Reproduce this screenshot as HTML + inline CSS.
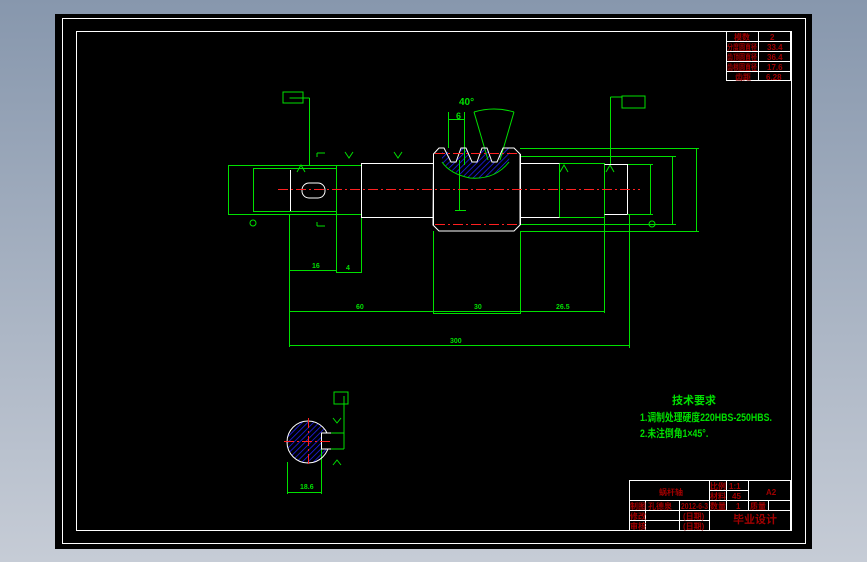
<!DOCTYPE html>
<html><head><meta charset="utf-8"><style>
html,body{margin:0;padding:0;width:867px;height:562px;overflow:hidden;background:linear-gradient(#8797ad,#c6ccd6);}
svg{position:absolute;left:0;top:0}
text{font-family:"Liberation Sans","Noto Sans CJK SC",sans-serif;}
</style></head><body>
<svg width="867" height="562" viewBox="0 0 867 562">
<defs>
<pattern id="h" width="4" height="4" patternUnits="userSpaceOnUse" patternTransform="rotate(45)">
<rect width="4" height="4" fill="#000"/><line x1="0" y1="0" x2="0" y2="4" stroke="#2020ff" stroke-width="1.5"/>
</pattern>
</defs>
<rect x="55" y="14" width="757" height="535" fill="#000"/>
<rect x="62.5" y="18.5" width="743" height="525" fill="none" stroke="#fff" stroke-width="1"/>
<rect x="76.5" y="31.5" width="715" height="499" fill="none" stroke="#fff" stroke-width="1"/>

<path d="M442 152 L448 152 L451 162 L456 162 L461 148 L466 148 L472 162 L477 162 L482 148 L487 148 L492 162 L497 162 L503 148 L510 148 L509 162 Q495 180 470 178 Q450 172 442 162Z" fill="url(#h)"/>
<path d="M442 162 Q450 174 470 178 Q495 180 509 162" fill="none" stroke="#00e000"/>
<circle cx="308" cy="442" r="21" fill="url(#h)"/>
<rect x="321" y="433" width="10" height="16" fill="#000"/>

<g fill="none" stroke="#00e000" stroke-width="1">
<rect x="228.5" y="165.5" width="108" height="49"/>
<rect x="253.5" y="168.5" width="83" height="43"/>
<rect x="336.5" y="165.5" width="25" height="49"/>
<rect x="559.5" y="163.5" width="45" height="54"/>
<path d="M289.5 214V347M336.5 214V273M361.5 217V273M289.5 270.5H336.5M336.5 272.5H361.5"/>
<path d="M289.5 311.5H604.5M433.5 231V314M520.5 231V314M604.5 217V313M433.5 313.5H520.5"/>
<path d="M629.5 214V348M289.5 345.5H629.5"/>
<path d="M520 148.5H699M696.5 148V231M520 231.5H699M520 156.5H676M672.5 156V224M520 224.5H676M604 164.5H653M650.5 164V214M604 214.5H653"/>
<path d="M309.5 98V165M289.5 98H309.5M283 92h20v11h-20zM283 92v11"/>
<path d="M610.5 97V165M610.5 97H622M622 96h23v12h-23z"/>
<path d="M448.5 112V148M464.5 112V165M448.5 119.5H464.5M474 112L488 160M514 112L500 160M474 112Q494 106 514 112"/>
<path d="M459.5 160V210M455 210.5H466"/>
<path d="M317 153h8M317 153v4M317 226h8M317 222v4"/>
<path d="M345 152l4 6 4-6M394 152l4 6 4-6M297 172l4-7 4 7M560 172l4-7 4 7M606 172l4-7 4 7"/>
<circle cx="253" cy="223" r="3"/><circle cx="652" cy="224" r="3"/>
<path d="M321 433H344V396M334 392h14v12h-14zM321 449H344M344 396V449M287.5 462V494M321.5 449V494M287.5 492.5H321.5"/>
<path d="M333 418l4 5 4-5M333 465l4-5 4 5"/>
</g>
<g fill="none" stroke="#fff" stroke-width="1">
<path d="M361.5 163.5H433.5M361.5 217.5H433.5M361.5 163V218"/>
<path d="M520.5 163.5H559.5M520.5 217.5H559.5"/>
<path d="M604.5 164.5H627.5V214M604.5 214.5H627.5"/>
<path d="M290.5 170V211"/>
<path d="M433.5 154L439 148H444L451 162H456L461 148H466L472 162H477L482 148H487L492 162H497L503 148H514L520 154V225L514 231H439L433 225Z"/>
<path d="M433.5 154V225M520.5 154V225"/>
<rect x="302" y="183" width="23" height="15" rx="7"/>
<circle cx="308" cy="442" r="21"/>
</g>
<rect x="321" y="433" width="9" height="16" fill="#000"/>
<path d="M321.5 433V449M321 433H331M321 449H331" stroke="#fff" fill="none"/>
<g stroke="#ff2020" stroke-width="1" stroke-dasharray="10,3,2,3">
<line x1="278" y1="189.5" x2="640" y2="189.5"/>
<line x1="435" y1="153.5" x2="520" y2="153.5"/>
<line x1="435" y1="224.5" x2="520" y2="224.5"/>
<line x1="284" y1="441.5" x2="332" y2="441.5"/>
<line x1="308.5" y1="418" x2="308.5" y2="466"/>
</g>
<g fill="#00e000" font-size="7" font-weight="bold">
<text x="459" y="105" font-size="10">40°</text>
<text x="456" y="119" font-size="9">6</text>
<text x="312" y="268">16</text><text x="346" y="270">4</text>
<text x="356" y="309">60</text><text x="474" y="309">30</text><text x="556" y="309">26.5</text>
<text x="450" y="343">300</text>
<text x="300" y="489">18.6</text>
<text x="672" y="404" font-size="11">技术要求</text>
<text x="640" y="421" font-size="11" transform="translate(640 0) scale(0.8 1) translate(-640 0)">1.调制处理硬度220HBS-250HBS.</text>
<text x="640" y="437" font-size="11" transform="translate(640 0) scale(0.8 1) translate(-640 0)">2.未注倒角1×45°.</text>
</g>
<g fill="none" stroke="#fff" stroke-width="1">
<rect x="726.5" y="31.5" width="64" height="49"/>
<path d="M758.5 31V81M726 41.5H791M726 51.5H791M726 61.5H791M726 71.5H791"/>
<rect x="629.5" y="480.5" width="161" height="50"/>
<path d="M629 500.5H791M629 510.5H709M629 520.5H709M709 490.5H749M749 510.5H791M709.5 480V531M726.5 480V511M748.5 480V511M645.5 500V531M679.5 500V531M768.5 500V511M709 510.5H749"/>
</g>
<g fill="#a00000" font-size="8" font-weight="bold">
<text x="734" y="40">模数</text><text x="770" y="40">2</text>
<text x="727" y="50" textLength="30" lengthAdjust="spacingAndGlyphs">分度圆直径</text><text x="767" y="50">33.4</text>
<text x="727" y="60" textLength="30" lengthAdjust="spacingAndGlyphs">齿顶圆直径</text><text x="767" y="60">36.4</text>
<text x="727" y="70" textLength="30" lengthAdjust="spacingAndGlyphs">齿根圆直径</text><text x="767" y="70">17.6</text>
<text x="735" y="80">齿距</text><text x="766" y="80">6.28</text>
<text x="659" y="495">蜗杆轴</text>
<text x="710" y="489">比例</text><text x="729" y="489">1:1</text><text x="766" y="495">A2</text>
<text x="710" y="499">材料</text><text x="732" y="499">45</text>
<text x="630" y="509">制图</text><text x="648" y="509">孔德泉</text><text x="681" y="509" textLength="27" lengthAdjust="spacingAndGlyphs">2012-6-3</text><text x="710" y="509">数量</text><text x="736" y="509">1</text><text x="750" y="509">质量</text>
<text x="630" y="519">修改</text><text x="683" y="519">(日期)</text>
<text x="630" y="529">审核</text><text x="683" y="529">(日期)</text>
<text x="733" y="523" font-size="11">毕业设计</text>
</g>
</svg>
</body></html>
